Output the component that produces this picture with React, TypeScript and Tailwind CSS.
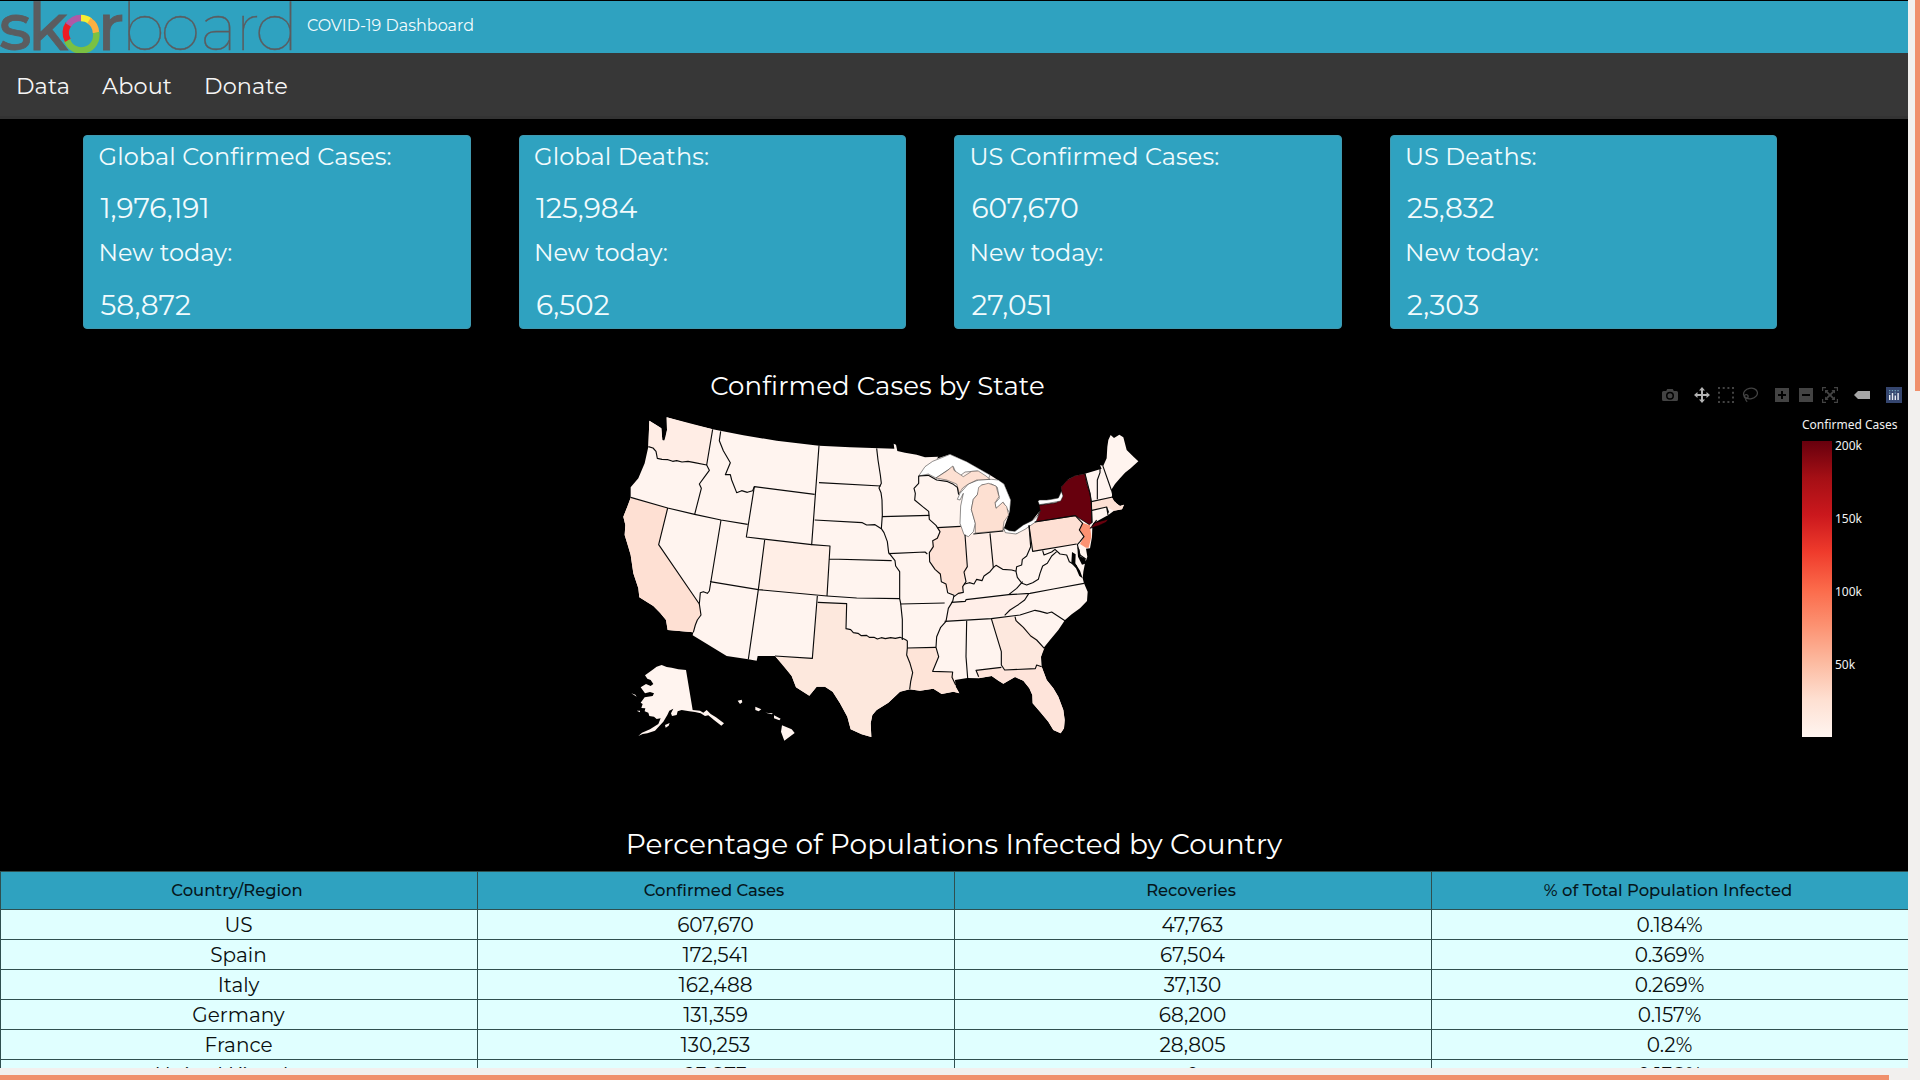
import type { ReactNode } from 'react';

const FONT = "font-['Montserrat','Inter',sans-serif]";

const cards = [
  { label: 'Global Confirmed Cases:', total: '1,976,191', today: '58,872' },
  { label: 'Global Deaths:', total: '125,984', today: '6,502' },
  { label: 'US Confirmed Cases:', total: '607,670', today: '27,051' },
  { label: 'US Deaths:', total: '25,832', today: '2,303' },
];

const columns = ['Country/Region', 'Confirmed Cases', 'Recoveries', '% of Total Population Infected'];

const rows = [
  ['US', '607,670', '47,763', '0.184%'],
  ['Spain', '172,541', '67,504', '0.369%'],
  ['Italy', '162,488', '37,130', '0.269%'],
  ['Germany', '131,359', '68,200', '0.157%'],
  ['France', '130,253', '28,805', '0.2%'],
  ['United Kingdom', '93,873', '0', '0.138%'],
];

function Logo() {
  return (
    <svg width="292" height="52" viewBox="0 1 292 52" className="block shrink-0 overflow-hidden">
      <g fill="#5b5c5f" fontFamily="Montserrat, Inter, sans-serif" fontSize="65">
        <text x="-1 28 97.500" y="50" fontWeight="500" stroke="#5b5c5f" strokeWidth="0.8">skr</text>
        <text x="121 160.500 200 235 255" y="50" fontWeight="100" stroke="#5b5c5f" strokeWidth="0.3">board</text>
      </g>
      <g fill="none" strokeWidth="6.5">
        <path d="M81 18 A15 15 0 0 1 90 21" stroke="#f9ed32" />
        <path d="M89 20.4 A15 15 0 0 1 96 33" stroke="#fbb040" />
        <path d="M96 32.5 A15 15 0 0 1 67 40" stroke="#7ac143" />
        <path d="M67.8 40.3 A15 15 0 0 1 68.6 24" stroke="#ed1c24" />
        <path d="M68.4 25 A15 15 0 0 1 81 18" stroke="#b05aa6" />
      </g>
    </svg>
  );
}

function StatCard({ label, total, today }: { label: string; total: string; today: string }) {
  return (
    <div className="h-[194px] rounded-[4px] border border-[#3f99b0] bg-[#2fa2c0] pl-[14.5px] text-[#f2fbfd]">
      <p className="h-[44px] pt-[5px] text-[24px] leading-[32px] tracking-[0.08px]">{label}</p>
      <p className="h-[54px] pl-[2px] pt-[8px] text-[28px] leading-[40px]">{total}</p>
      <p className="h-[40px] pt-[3px] text-[24px] leading-[32px]">New today:</p>
      <p className="pl-[2px] pt-[11px] text-[28px] leading-[40px]">{today}</p>
    </div>
  );
}

function UsMap() {
  return (
    <svg width="550" height="352" viewBox="0 0 1650 1056" className="block">
      {/* land */}
      <path
        fill="#fff4ef"
        d="M118 62 L140 76 L154 85 L157 121 L163 122 L168 112 L171 90 L170 52 L240 72 L308 88 L400 106 L500 122 L627 137 L720 142 L853 146 L851 131 L858 134 L862 153 L885 158 L920 164 L945 172 L985 170 L980 176
        L1020 163 L1070 185 L1140 225 L1182 252 L1202 300 L1198 338 L1180 390 L1220 402 L1260 370 L1290 332 L1290 316 L1320 308 L1350 300 L1357 280 L1353 262 L1375 238 L1395 227 L1425 221 L1475 206 L1470 196 L1480 197 L1490 175 L1492 140 L1495 120 L1502 105 L1512 114 L1528 104 L1540 112 L1550 150 L1572 172 L1585 184 L1562 205 L1545 218 L1530 235 L1515 252 L1505 268 L1508 280 L1505 292 L1518 308 L1530 318 L1542 314 L1536 328 L1512 332 L1495 345 L1450 370 L1447 380
        L1446 410 L1440 445 L1428 446 L1432 470 L1425 490 L1420 515 L1418 535 L1422 550 L1433 575 L1431 603 L1410 625 L1385 643 L1365 660 L1345 690 L1320 720 L1300 745 L1293 770 L1295 800 L1310 840 L1330 865 L1345 890 L1360 930 L1364 960 L1362 985 L1352 1000 L1330 990 L1315 965 L1290 935 L1268 910 L1267 885 L1258 865 L1240 842 L1215 831 L1195 842 L1180 851 L1165 842 L1145 828 L1105 835 L1072 834 L1035 840 L1037 860 L1048 880 L1030 875 L995 882 L985 875 L970 866 L950 869 L930 872 L898 868 L870 875
        L835 908 L800 930 L787 945 L782 970 L784 1011 L755 1003 L722 988 L712 950 L690 910 L668 875 L645 860 L620 860 L598 887 L558 862 L545 828 L520 795 L495 768 L443 768 L440 782 L415 778 L350 768 L248 706 L250 697 L173 690 L168 660 L150 638 L130 618 L88 592 L85 565 L70 520 L62 465 L55 440 L44 405 L46 375 L40 350 L52 320 L62 293 L62 262 L85 235 L104 190 L115 140 Z"
      />
      {/* shaded states */}
      <path fill="#ffede5" d="M118 62 L154 85 L157 121 L163 122 L171 90 L170 52 L308 88 L290 195 L210 184 L142 176 L138 152 L115 140Z" />
      <path fill="#fee0d3" d="M62 293 L173 324 L146 434 L268 612 L273 645 L262 660 L250 697 L173 690 L168 660 L150 638 L130 618 L88 592 L85 565 L70 520 L62 465 L44 405 L46 375 L40 350 L52 320Z" />
      <path fill="#ffeee6" d="M464 420 L660 438 L651 588 L445 569Z" />
      <path fill="#fde8dd" d="M623 607 L710 611 L708 686 L750 704 L800 715 L850 711 L892 722 L893 780 L909 820 L900 868 L870 875 L835 908 L800 930 L787 945 L782 970 L784 1011 L755 1003 L722 988 L712 950 L690 910 L668 875 L645 860 L620 860 L598 887 L558 862 L545 828 L495 768 L607 775Z" />
      <path fill="#fee4d8" d="M892 744 L978 742 L985 770 L968 814 L1028 816 L1037 860 L1048 880 L1030 875 L995 882 L970 866 L930 872 L898 868 L909 820 L893 780Z" />
      <path fill="#fee2d6" d="M982 383 L1062 379 L1072 500 L1068 545 L1052 585 L1025 582 L1005 562 L995 535 L970 502 L958 470 L965 438 L968 422 L990 400Z" />
      <path fill="#ffeee7" d="M1062 404 L1140 399 L1150 503 L1110 542 L1060 552 L1072 500Z" />
      <path fill="#ffeee7" d="M1140 399 L1182 392 L1220 402 L1257 376 L1262 440 L1235 480 L1218 514 L1185 508 L1150 503Z" />
      <path fill="#ffeee8" d="M1020 607 L1258 580 L1195 645 L1005 664Z" />
      <path fill="#fee4da" d="M1098 810 L1174 802 L1184 810 L1276 806 L1280 795 L1295 800 L1310 840 L1330 865 L1345 890 L1360 930 L1364 960 L1362 985 L1352 1000 L1330 990 L1315 965 L1290 935 L1268 910 L1267 885 L1258 865 L1240 842 L1215 831 L1180 851 L1145 828 L1106 835Z" />
      <path fill="#fde8de" d="M1144 656 L1215 650 L1225 664 L1275 710 L1303 745 L1293 770 L1293 798 L1278 796 L1276 806 L1184 810 L1174 795 L1174 760Z" />
      <path fill="#fee0d4" d="M1257 376 L1270 368 L1396 347 L1410 362 L1416 368 L1408 390 L1422 410 L1400 432 L1268 454Z" />
      <path fill="#fee0d4" d="M1444 305 L1505 291 L1518 308 L1530 318 L1542 314 L1536 328 L1512 332 L1490 322 L1446 331Z" />
      <path fill="#fc9272" d="M1416 368 L1440 376 L1444 410 L1436 443 L1428 443 L1410 432 L1422 410 L1408 390Z" />
      <path fill="#67000d" stroke="#000" strokeWidth="2" d="M1274 366 L1290 332 L1287 316 L1340 308 L1357 288 L1353 262 L1372 240 L1395 227 L1425 221 L1430 250 L1440 280 L1444 310 L1446 368 L1438 374 L1396 347Z M1440 385 L1455 368 L1496 357 L1488 367 L1466 377Z" />
      {/* great lakes */}
      <g fill="#fff" stroke="#222" strokeWidth="1.5">
        <path d="M926 228 L945 200 L968 184 L1020 163 L1070 185 L1140 225 L1134 240 L1102 213 L1065 216 L1044 232 L1030 200 L1010 212 L978 234 L955 222Z" />
        <path d="M1050 300 L1042 298 L1050 280 L1075 252 L1105 240 L1145 238 L1165 240 L1182 252 L1202 300 L1199 338 L1188 322 L1180 307 L1158 326 L1155 310 L1168 295 L1162 262 L1145 252 L1115 255 L1102 284 L1090 298 L1084 328 L1096 370 L1090 395 L1075 410 L1062 404 L1050 370 L1052 318 L1060 280Z" />
        <path d="M1180 383 L1198 392 L1215 394 L1240 375 L1270 360 L1285 345 L1292 330 L1278 365 L1245 388 L1218 402 L1186 398Z" />
        <path d="M1284 304 L1288 300 L1310 300 L1325 298 L1345 294 L1349 286 L1354 274 L1359 288 L1352 303 L1320 309 L1288 314Z" />
      </g>
      <path fill="#fde0d2" stroke="#333" strokeWidth="1.5" d="M978 234 L1012 212 L1028 198 L1032 211 L1060 230 L1085 214 L1105 213 L1128 228 L1140 238 L1100 240 L1075 252 L1058 264 L1048 280 L1040 252 L1010 240Z" />
      <path fill="#fde0d2" stroke="#333" strokeWidth="1.5" d="M1096 399 L1096 370 L1084 328 L1090 298 L1102 284 L1106 262 L1115 255 L1135 250 L1158 258 L1167 290 L1155 308 L1158 325 L1178 307 L1190 320 L1196 345 L1182 365 L1178 392Z" />
      {/* Chesapeake and Delaware bays */}
      <path fill="#000" d="M1386 456 L1397 463 L1396 490 L1410 512 L1418 535 L1408 528 L1398 505 L1384 490Z M1402 440 L1408 448 L1412 470 L1424 474 L1430 490 L1416 494 L1404 470Z" />
      {/* state borders */}
      <g fill="none" stroke="#0a0a0a" strokeWidth="3.4" strokeLinejoin="round">
        <path d="M115 140 l14 4 l9 10 l4 21 l14 3 l18 1 l14 5 l12 -2 l16 4 l18 -2 l20 4 L290 195 L308 88" />
        <path d="M290 195 L298 211 L282 233 L268 252 L274 265 L254 343" />
        <path d="M332 94 L328 122 L340 152 L361 188 L346 224 L361 224 L365 240 L380 278 L395 272 L412 277 L428 272 L433 260 L614 283" />
        <path d="M433 260 L409 411 L605 434 L627 137 M627 248 L812 258" />
        <path d="M62 292 L173 324 L254 343 L333 360 L413 373" />
        <path d="M173 324 L146 434 L268 612 L271 578 L280 575 L292 580 L298 573 L333 360 M300 545 L445 569 L651 588" />
        <path d="M268 612 L273 645 L262 660 L256 675 L250 697" />
        <path d="M464 420 L445 569 L415 778 M605 434 L660 438 L651 588 M658 477 L845 482 M622 588 L607 775 L495 768" />
        <path d="M651 588 L740 594 L870 596 M623 607 L710 611 L708 686 l14 3 l8 9 l14 2 l10 7 l16 -1 l8 6 l14 0 l10 5 l12 -4 l12 3 l16 -3 l14 2 l14 -3 l14 6 L892 722" />
        <path d="M800 145 L804 180 L811 225 L814 250 L807 264 L813 278 L816 300 L817 345 L814 386 L822 398 L832 425 L836 458 L855 482 L857 498 L869 515 L869 596 L872 610 L877 658 L877 720" />
        <path d="M614 360 L757 368 L770 375 L795 374 L814 386 M816 350 L958 346 M836 461 L945 456 L952 462 M871 612 L1004 609 M892 744 L978 742" />
        <path d="M892 722 L892 744 L890 765 L900 790 L908 818 L902 845 L899 868" />
        <path d="M926 228 L926 250 L912 265 L916 280 L914 300 L938 320 L956 334 L958 358 L978 376 L990 395 L982 415 L968 422 L970 440 L958 458 L959 485 L975 508 L991 522 L994 545 L1008 552 L1013 578 L1032 586 L1028 604 L1015 625 L1008 664 L992 682 L980 710 L978 742 L986 770 L968 814 L1028 816 L1026 832 L1037 855" />
        <path d="M982 383 L1052 379 M926 228 L955 226 L980 240 L1010 244 L1030 253 L1042 262 L1046 284" />
        <path d="M1065 404 L1072 500 L1062 516 L1068 545 L1058 560 L1060 577 L1045 580 L1032 590" />
        <path d="M1062 553 L1078 548 L1092 552 L1100 538 L1116 542 L1122 528 L1140 515 L1150 503 L1158 496 L1178 508 L1205 510 L1218 514 L1220 500 L1235 495 L1237 478 L1250 468 L1262 440 L1257 376" />
        <path d="M1090 402 L1180 393 M1140 400 L1150 503" />
        <path d="M1257 376 L1268 454 L1400 432 M1298 452 L1302 465 L1325 456 L1335 448 L1350 462 L1370 465 L1378 485 L1400 498" />
        <path d="M1274 366 L1396 347 L1410 362 L1418 370 L1408 390 L1422 410 L1410 425 L1402 434 L1410 465 L1428 478" />
        <path d="M1218 514 L1222 532 L1236 550 L1250 555 L1268 548 L1285 538 L1290 520 L1298 498 L1312 490 L1325 468 L1340 455" />
        <path d="M1238 545 L1220 565 L1196 584 M1024 607 L1066 604 L1068 599 L1196 584 L1260 580 L1330 567 L1422 550" />
        <path d="M1004 664 L1144 656 L1230 645 L1275 631 L1290 634 L1312 640 L1325 636 L1365 662" />
        <path d="M1256 581 L1244 600 L1225 614 L1200 630 L1184 646 M1215 650 L1218 662 L1240 682 L1262 708 L1280 720 L1303 745" />
        <path d="M1070 662 L1068 770 L1073 834 M1144 656 L1174 755 L1174 795 L1184 810 L1276 806 L1280 795 L1295 800 M1174 802 L1098 811 L1106 830" />
        <path d="M1425 221 L1440 280 L1444 305 L1508 291 L1515 304 M1446 331 L1490 321 L1496 338 M1444 305 L1446 368 M1490 322 L1494 345" />
        <path d="M1470 200 L1470 218 L1462 240 L1462 298 M1478 196 L1504 270 M1446 378 L1460 360" />
        <path stroke="#000" strokeWidth="5" d="M1505 268 L1508 280 L1510 292 L1520 306 L1530 314" />
      </g>
      {/* Alaska */}
      <path fill="#fff4ef" d="M228 810 L248 930 L270 932 L280 938 L290 930 L302 942 L318 952 L342 970 L334 977 L312 960 L295 946 L285 948 L272 940 L255 936 L238 934 L215 930 L203 934 L200 945 L186 948 L183 940 L190 926 L178 932 L172 945 L160 965 L148 978 L135 992 L112 1000 L98 1002 L85 1008 L96 998 L120 988 L145 972 L152 955 L140 957 L132 950 L118 948 L115 938 L104 934 L106 925 L94 924 L98 912 L92 908 L104 892 L128 888 L132 880 L120 876 L105 880 L92 862 L108 852 L122 858 L130 852 L122 840 L112 836 L105 826 L130 808 L140 800 L155 795 L170 801 L185 803 L205 808Z M165 975 l14 -6 l-3 8 l-9 6z M64 880 l12 4 l4 6z M80 932 l10 0 l0 5z" />
      {/* Hawaii */}
      <path fill="#fff4ef" d="M383 902 l12 -3 l2 8 l-7 5z M436 920 l18 8 l-8 6 l-10 -4z M466 938 l22 2 l-2 3z M492 946 l20 10 l-4 5 l-16 -6z M516 976 L545 988 L554 999 L523 1022 L513 995Z" />
    </svg>
  );
}

function Icon({ children, color = '#434343' }: { children: ReactNode; color?: string }) {
  return (
    <svg width="16" height="16" viewBox="0 0 16 16" fill={color} className="block">
      {children}
    </svg>
  );
}

function ModeBar() {
  return (
    <div className="flex gap-4">
      <Icon>
        <path fillRule="evenodd" d="M1.5 4 H4.2 L5.2 2 H10.8 L11.8 4 H14.5 Q16 4 16 5.500 V12.500 Q16 14 14.500 14 H1.500 Q0 14 0 12.500 V5.500 Q0 4 1.500 4Z M8 4.800 A4 4 0 1 0 8 12.800 A4 4 0 1 0 8 4.800Z M8 6.300 A2.500 2.500 0 1 1 8 11.300 A2.500 2.500 0 1 1 8 6.300Z" />
      </Icon>
      <div className="flex gap-2">
        <Icon color="#b4b4b4">
          <path d="M8 0 L11 3.500 H9 V7 H12.500 V5 L16 8 L12.500 11 V9 H9 V12.500 H11 L8 16 L5 12.500 H7 V9 H3.500 V11 L0 8 L3.500 5 V7 H7 V3.500 H5Z" />
        </Icon>
        <Icon>
          <path d="M0 0h2v2H0zM4.700 0h2v2h-2zM9.400 0h2v2h-2zM14 0h2v2h-2zM0 4.700h2v2H0zM14 4.700h2v2h-2zM0 9.400h2v2H0zM14 9.400h2v2h-2zM0 14h2v2H0zM4.700 14h2v2h-2zM9.400 14h2v2h-2zM14 14h2v2h-2z" />
        </Icon>
        <Icon>
          <g fill="none" stroke="#434343" strokeWidth="1.300">
            <ellipse cx="8.500" cy="6.500" rx="7" ry="5.300" transform="rotate(-12 8.500 6.500)" />
            <circle cx="4.200" cy="9.500" r="1.900" />
            <path d="M3.800 11.400 Q3 13 5.200 14.800" />
          </g>
        </Icon>
      </div>
      <div className="flex gap-2">
        <Icon>
          <path fillRule="evenodd" d="M1 1H15V15H1Z M7 4V7H4V9H7V12H9V9H12V7H9V4Z" />
        </Icon>
        <Icon>
          <path fillRule="evenodd" d="M1 1H15V15H1Z M4 7V9H12V7Z" />
        </Icon>
        <Icon>
          <path d="M0 0H4V1.200H1.200V4H0Z M12 0H16V4H14.800V1.200H12Z M0 12H1.200V14.800H4V16H0Z M14.800 12H16V16H12V14.800H14.800Z" />
          <path d="M3 3H6.500L5.500 4.200L8 6.700L10.500 4.200L9.500 3H13V6.500L11.800 5.500L9.300 8L11.800 10.500L13 9.500V13H9.500L10.500 11.800L8 9.300L5.500 11.800L6.500 13H3V9.500L4.200 10.500L6.700 8L4.200 5.500L3 6.500Z" />
        </Icon>
      </div>
      <Icon color="#a6a6a6">
        <path d="M0 8 L4 4 H16 V12 H4Z" />
      </Icon>
      <Icon color="#35466f">
        <path d="M0 0H16V16H0Z" />
        <path fill="#e8edf5" d="M3 8h1.400v5H3zM5.800 6h1.400v7H5.800zM8.600 8.500h1.400v4.500H8.600zM11.400 6h1.400v7h-1.400z" />
        <path fill="#6f9fb8" d="M3 3h1.300v1.200H3zM5.800 3h1.300v1.200H5.800zM8.600 3h1.300v1.200H8.600zM11.400 3h1.300v1.200h-1.300zM3 5.500h1.300v1.200H3zM8.600 5.500h1.300v1.200H8.600z" />
      </Icon>
    </div>
  );
}

function ColorScale() {
  return (
    <div className="w-[106px] font-['Noto_Sans',sans-serif] text-[12px] text-[#f2f2f2]">
      <p className="h-[24px] whitespace-nowrap leading-[16px]">Confirmed Cases</p>
      <div className="flex gap-[3px]">
        <div className="h-[296px] w-[30px] bg-[linear-gradient(to_top,#fff5f0_0%,#fee0d2_12.5%,#fcbba1_25%,#fc9272_37.5%,#fb6a4a_50%,#ef3b2c_62.5%,#cb181d_75%,#a50f15_87.5%,#67000d_100%)]" />
        <div className="flex flex-col gap-[57px] -mt-[3px] leading-[16px]">
          <span>200k</span>
          <span>150k</span>
          <span>100k</span>
          <span>50k</span>
        </div>
      </div>
    </div>
  );
}

export default function App() {
  return (
    <div className={`${FONT} flex h-[1080px] w-[1920px] flex-col overflow-hidden bg-[#f2f0ee]`}>
      <div className="flex h-[1068px] shrink-0">
        <main className="flex w-[1908px] shrink-0 flex-col overflow-hidden bg-black">
          <header className="flex h-[53px] shrink-0 border-t border-black bg-[#2fa2c0]">
            <Logo />
            <span className="pl-[15px] pt-[13px] text-[16px] leading-[24px] text-[#f2fbfd]">COVID-19 Dashboard</span>
          </header>
          <nav className="flex h-[66px] shrink-0 gap-[32px] border-b-[3px] border-[#333] bg-[#373737] pl-[16px] pt-[17px] text-[22.4px] leading-[32px] tracking-[0.12px] text-[#f5f5f5]">
            <a>Data</a>
            <a>About</a>
            <a>Donate</a>
          </nav>

          <section className="grid shrink-0 grid-cols-4 gap-x-[48px] pl-[83px] pr-[131px] pt-4">
            {cards.map((card) => (
              <StatCard key={card.label} {...card} />
            ))}
          </section>

          <section className="flex h-[493px] shrink-0">
            <div className="ml-[610px] w-[550px] shrink-0">
              <h2 className="h-[71px] pr-[15px] pt-[41px] text-center text-[26px] leading-[32px] tracking-[0.1px] text-white">
                Confirmed Cases by State
              </h2>
              <UsMap />
            </div>
            <div className="flex flex-1 flex-col items-end pt-[58px]">
              <div className="pr-[6px]">
                <ModeBar />
              </div>
              <div className="pt-[14px]">
                <ColorScale />
              </div>
            </div>
          </section>

          <h2 className="h-[49px] shrink-0 pt-[4px] text-center text-[28px] leading-[36px] text-white">
            Percentage of Populations Infected by Country
          </h2>
          <div className="flex shrink-0 flex-col border-l border-t border-[#2f4f4f]">
            <div className="grid h-[38px] grid-cols-[repeat(4,477px)] bg-[#2fa2c0]">
              {columns.map((name) => (
                <div
                  key={name}
                  className="border-b border-r border-[#2f4f4f] pr-[4px] pt-[6px] text-center text-[16.4px] font-medium leading-[24px] text-[#05161c]"
                >
                  {name}
                </div>
              ))}
            </div>
            {rows.map((row) => (
              <div key={row[0]} className="grid h-[30px] grid-cols-[repeat(4,477px)] bg-[#e0ffff] text-center text-[20px] leading-[27px] text-[#0a0f0f]">
                {row.map((value, i) => (
                  <div key={i} className="border-b border-r border-[#2f4f4f] pr-px pt-[2px]">
                    {value}
                  </div>
                ))}
              </div>
            ))}
          </div>
        </main>
        <div className="flex w-[12px] justify-end">
          <div className="h-[391px] w-[5px] bg-[#f0906c]" />
        </div>
      </div>
      <div className="flex h-[12px] items-end">
        <div className="h-[5px] w-[1889px] bg-[#f0906c]" />
      </div>
    </div>
  );
}
